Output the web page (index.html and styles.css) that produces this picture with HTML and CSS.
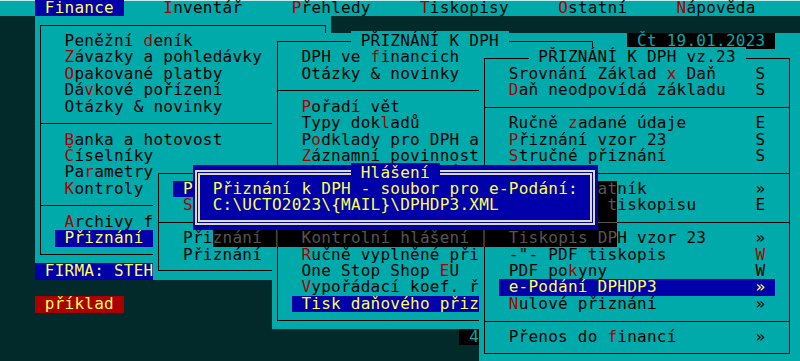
FILE: index.html
```html
<!DOCTYPE html>
<html lang="cs">
<head>
  <meta charset="UTF-8">
  <title>Finance - Přiznání k DPH</title>
  <link rel="stylesheet" href="styles.css">
</head>
<body>
  <div class="screen">
    <nav class="menubar">
      <span class="on">Finance</span>
      <span><span class="k">I</span>nventář</span>
      <span><span class="k">P</span>řehledy</span>
      <span><span class="k">T</span>iskopisy</span>
      <span><span class="k">O</span>statní</span>
      <span><span class="k">N</span>ápověda</span>
    </nav>

    <div class="backdrop"></div>
    <div class="date">Čt 19.01.2023</div>
    <div class="firma">FIRMA: STEH</div>
    <div class="demo">příklad</div>
    <div class="num4">4</div>

    <!-- Finance menu -->
    <div class="win win-a">
      <div class="ttl"></div>
      <div class="it"><span>Peněžní <span class="k">d</span>eník</span></div>
      <div class="it"><span><span class="k">Z</span>ávazky a pohledávky</span></div>
      <div class="it"><span><span class="k">O</span>pakované platby</span></div>
      <div class="it"><span>Dá<span class="k">v</span>kové pořízení</span></div>
      <div class="it"><span>Otázky &amp; novinky</span></div>
      <div class="sep"></div>
      <div class="it"><span><span class="k">B</span>anka a hotovost</span></div>
      <div class="it"><span><span class="k">Č</span>íselníky</span></div>
      <div class="it"><span>Pa<span class="k">r</span>ametry</span></div>
      <div class="it"><span><span class="k">K</span>ontroly</span></div>
      <div class="sep"></div>
      <div class="it"><span><span class="k">A</span>rchivy firem</span></div>
      <div class="it on"><span>Přiznání</span></div>
    </div>

    <!-- Přiznání submenu -->
    <div class="win win-d">
      <div class="ttl"></div>
      <div class="it on"><span>Přiznání k DPH</span></div>
      <div class="it"><span><span class="k">S</span>ouhrnné hlášení</span></div>
      <div class="sep"></div>
      <div class="it"><span>Přiznání</span></div>
      <div class="it"><span>Přiznání</span></div>
    </div>

    <!-- PŘIZNÁNÍ K DPH -->
    <div class="win win-b">
      <div class="ttl"><span>PŘIZNÁNÍ K DPH</span></div>
      <div class="it"><span>DPH ve <span class="k">f</span>inancích</span></div>
      <div class="it"><span>Otázky &amp; novinky</span></div>
      <div class="sep"></div>
      <div class="it"><span><span class="k">P</span>ořadí vět</span></div>
      <div class="it"><span>Typy dok<span class="k">l</span>adů</span></div>
      <div class="it"><span>P<span class="k">o</span>dklady pro DPH a KH</span></div>
      <div class="it"><span><span class="k">Z</span>áznamní povinnost</span></div>
      <div class="it"><span>Souhrnné hlášení</span></div>
      <div class="sep"></div>
      <div class="it"><span>Přiznání k DPH</span></div>
      <div class="sep"></div>
      <div class="it"><span>Kontrolní hlášení</span></div>
      <div class="it"><span><span class="k">R</span>učně vyplněné přiznání</span></div>
      <div class="it"><span>One Stop Shop <span class="k">E</span>U</span></div>
      <div class="it"><span><span class="k">V</span>ypořádací koef. ř.52</span></div>
      <div class="it on"><span>Tisk daňového přiznání</span></div>
    </div>

    <!-- PŘIZNÁNÍ K DPH vz.23 -->
    <div class="win win-c">
      <div class="ttl"><span>PŘIZNÁNÍ K DPH vz.23</span></div>
      <div class="it"><span>Srovnání Základ <span class="k">x</span> Daň</span><span>S</span></div>
      <div class="it"><span><span class="k">D</span>aň neodpovídá základu</span><span>S</span></div>
      <div class="sep"></div>
      <div class="it"><span>Ručně <span class="k">z</span>adané údaje</span><span>E</span></div>
      <div class="it"><span><span class="k">P</span>řiznání vzor 23</span><span>S</span></div>
      <div class="it"><span><span class="k">S</span>tručné přiznání</span><span>S</span></div>
      <div class="sep"></div>
      <div class="it"><span>Daňový platník</span><span>»</span></div>
      <div class="it"><span>Nastavení tiskopisu</span><span>E</span></div>
      <div class="sep"></div>
      <div class="it"><span>Tiskopis DPH vzor 23</span><span>»</span></div>
      <div class="it"><span>-"- PDF tiskopis</span><span class="k">W</span></div>
      <div class="it"><span>PDF po<span class="k">k</span>yny</span><span>W</span></div>
      <div class="it on"><span>e-Podání DPHDP3</span><span>»</span></div>
      <div class="it"><span><span class="k">N</span>ulové přiznání</span><span>»</span></div>
      <div class="sep"></div>
      <div class="it"><span>Přenos do <span class="k">f</span>inancí</span><span>»</span></div>
    </div>

    <!-- Hlášení -->
    <div class="dlg">
      <div class="ttl"><span>Hlášení</span></div>
      <div class="msg">Přiznání k DPH - soubor pro e-Podání:</div>
      <div class="msg">C:\UCTO2023\{MAIL}\DPHDP3.XML</div>
    </div>
    <div class="shd shd-r">
      <div class="ln">at</div>
      <div class="ln"> t</div>
      <div class="sep"></div>
    </div>
    <div class="shd shd-b">znání │  Kontrolní hlášení │  Tiskopis DP</div>
  </div>
</body>
</html>
```

FILE: styles.css
```css
:root {
  --cw: 9.87px;
  --rh: 16.45px;
  --x0: 5.4px;
  --teal: #00aaaa;
  --dark: #022a2a;
  --blue: #0000aa;
  --red: #aa0000;
  --yel: #ffff55;
  --frame: #dcdcb4;
}
* {
  box-sizing: border-box;
}
body {
  margin: 0;
  background: var(--dark);
  font-family: "DejaVu Sans Mono", monospace;
  font-size: 16px;
  letter-spacing: 0.24px;
  line-height: var(--rh);
  color: #000;
  white-space: nowrap;
  overflow: hidden;
}
.screen {
  position: relative;
  width: 800px;
  height: 361px;
  overflow: hidden;
}
.k {
  color: var(--red);
}

/* menu bar */
.menubar {
  display: flex;
  gap: calc(var(--cw) * 3);
  height: var(--rh);
  padding-left: calc(var(--x0) + var(--cw) * 3);
  background: var(--teal);
  box-shadow: inset 0 1px #c4ecec;
}
.menubar > span {
  padding: 0 var(--cw);
}
.menubar .on {
  background: var(--blue);
  color: var(--yel);
}

/* loose screen pieces */
.backdrop, .date, .firma, .demo, .num4, .win, .dlg, .shd {
  position: absolute;
}
.backdrop {
  left: calc(var(--x0) + var(--cw) * 3);
  top: calc(var(--rh) * 2);
  right: 0;
  height: calc(var(--rh) * 15);
  background: var(--teal);
}
.date {
  left: calc(var(--x0) + var(--cw) * 63);
  top: calc(var(--rh) * 2);
  width: calc(var(--cw) * 15);
  height: var(--rh);
  padding-left: var(--cw);
  background: #000;
  color: var(--teal);
}
.firma {
  left: calc(var(--x0) + var(--cw) * 3);
  top: calc(var(--rh) * 16);
  width: calc(var(--cw) * 12);
  height: var(--rh);
  padding-left: var(--cw);
  background: var(--blue);
  color: var(--yel);
}
.demo {
  left: calc(var(--x0) + var(--cw) * 3);
  top: calc(var(--rh) * 18);
  width: calc(var(--cw) * 9);
  height: var(--rh);
  padding-left: var(--cw);
  background: var(--red);
  color: var(--yel);
}
.num4 {
  left: calc(var(--x0) + var(--cw) * 46);
  top: calc(var(--rh) * 20);
  width: calc(var(--cw) * 2);
  height: var(--rh);
  background: #000;
  color: var(--teal);
  text-align: right;
}

/* windows */
.win {
  background: var(--teal);
}
.win::before {
  content: '';
  position: absolute;
  top: calc(var(--rh) / 2);
  bottom: calc(var(--rh) / 2);
  left: calc(var(--cw) / 2);
  right: calc(var(--cw) / 2);
  border: 1px solid #000;
}
.ttl {
  height: var(--rh);
}
.ttl span {
  position: relative;
  padding: 0 var(--cw);
  background: var(--teal);
}
.it {
  display: flex;
  justify-content: space-between;
  height: var(--rh);
  margin: 0 calc(var(--cw) * 2);
  padding: 0 var(--cw);
}
.it.on {
  background: var(--blue);
  color: var(--yel);
}
.it.on .k {
  color: var(--yel);
}
.sep {
  position: relative;
  height: var(--rh);
}
.sep::after {
  content: '';
  position: absolute;
  left: calc(var(--cw) / 2);
  right: calc(var(--cw) / 2);
  top: calc(var(--rh) / 2);
  border-top: 1px solid #000;
}

.win-a {
  left: calc(var(--x0) + var(--cw) * 3);
  top: var(--rh);
  width: calc(var(--cw) * 30);
  height: calc(var(--rh) * 15);
}
.win-d {
  left: calc(var(--x0) + var(--cw) * 15);
  top: calc(var(--rh) * 10);
  width: calc(var(--cw) * 16);
  height: calc(var(--rh) * 7);
}
.win-b {
  left: calc(var(--x0) + var(--cw) * 27);
  top: calc(var(--rh) * 2);
  width: calc(var(--cw) * 33);
  height: calc(var(--rh) * 18);
}
.win-b .ttl {
  padding-left: calc(var(--cw) * 8);
}
.win-c {
  left: calc(var(--x0) + var(--cw) * 48);
  top: calc(var(--rh) * 3);
  width: calc(var(--cw) * 32 + 5.3px);
  height: calc(var(--rh) * 19);
  padding-right: 5.3px;
}
.win-c::before {
  right: calc(var(--cw) / 2 + 5.3px);
}
.win-c .ttl {
  padding-left: calc(var(--cw) * 5);
}

/* message box */
.dlg {
  left: calc(var(--x0) + var(--cw) * 19);
  top: calc(var(--rh) * 10);
  width: calc(var(--cw) * 41);
  height: calc(var(--rh) * 4);
  background: var(--blue);
  color: var(--yel);
}
.dlg::before {
  content: '';
  position: absolute;
  top: calc(var(--rh) / 2 - 2.5px);
  bottom: calc(var(--rh) / 2 - 2.5px);
  left: calc(var(--cw) / 2 - 2.5px);
  right: calc(var(--cw) / 2 - 2.5px);
  border: 5px double var(--frame);
}
.dlg .ttl {
  padding-left: calc(var(--cw) * 16);
}
.dlg .ttl span {
  background: var(--blue);
}
.msg {
  height: var(--rh);
  padding-left: calc(var(--cw) * 2);
}

/* shadow under the message box */
.shd {
  background: #000;
  color: #555;
  overflow: hidden;
}
.shd .ln, .shd-b {
  white-space: pre;
}
.shd .sep::after {
  left: 0;
  right: 0;
  border-color: #555;
}
.shd-r {
  left: calc(var(--x0) + var(--cw) * 60);
  top: calc(var(--rh) * 11);
  width: calc(var(--cw) * 2);
  height: calc(var(--rh) * 3);
}
.shd-b {
  left: calc(var(--x0) + var(--cw) * 21);
  top: calc(var(--rh) * 14);
  width: calc(var(--cw) * 41);
  height: var(--rh);
}
```
